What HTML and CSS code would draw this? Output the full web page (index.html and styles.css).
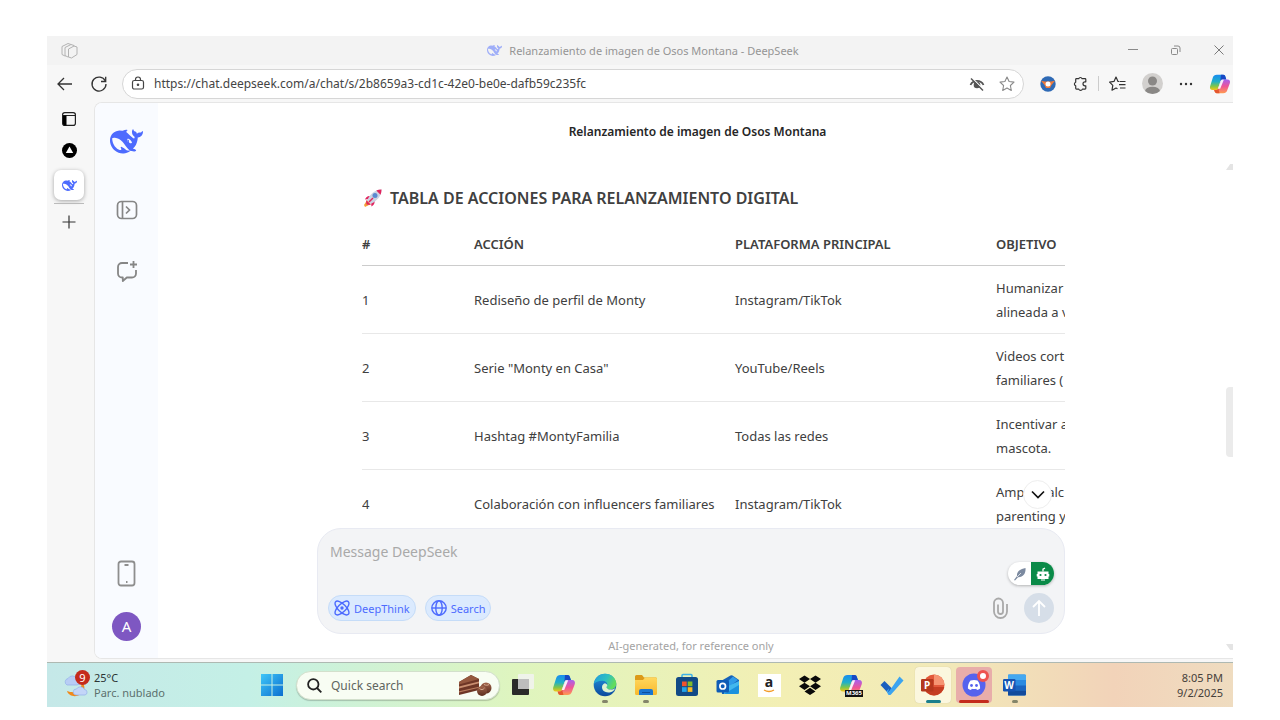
FILE: index.html
```html
<!DOCTYPE html>
<html lang="es">
<head>
<meta charset="utf-8">
<title>Relanzamiento de imagen de Osos Montana - DeepSeek</title>
<link rel="stylesheet" href="styles.css">
</head>
<body>
<svg class="defs" aria-hidden="true">
  <defs>
    <linearGradient id="cpBlue" x1="0" y1="0" x2="0" y2="1"><stop offset="0" stop-color="#1a8cf0"/><stop offset=".45" stop-color="#1fb0c8"/><stop offset=".75" stop-color="#7fc64a"/><stop offset="1" stop-color="#f5c518"/></linearGradient>
    <linearGradient id="cpPink" x1="0" y1="0" x2="0" y2="1"><stop offset="0" stop-color="#a560f0"/><stop offset=".5" stop-color="#ee5598"/><stop offset="1" stop-color="#ff9a50"/></linearGradient>
    <linearGradient id="edgeA" x1="0" y1="0" x2="1" y2="0.4"><stop offset="0" stop-color="#1f9be0"/><stop offset=".6" stop-color="#2fc0c0"/><stop offset="1" stop-color="#62dc5c"/></linearGradient>
    <linearGradient id="edgeB" x1="0" y1="0" x2="0" y2="1"><stop offset="0" stop-color="#2394e0"/><stop offset="1" stop-color="#0b4a9c"/></linearGradient>
    <linearGradient id="winG" x1="0" y1="0" x2="1" y2="1"><stop offset="0" stop-color="#3fc6f8"/><stop offset="1" stop-color="#0a6fd0"/></linearGradient>
    <linearGradient id="folderG" x1="0" y1="0" x2="0" y2="1"><stop offset="0" stop-color="#ffd75e"/><stop offset="1" stop-color="#f8b92c"/></linearGradient>
    <linearGradient id="chocG" x1="0" y1="0" x2="0" y2="1"><stop offset="0" stop-color="#a2664c"/><stop offset="1" stop-color="#5c2c1e"/></linearGradient>
    <symbol id="whale" viewBox="0 0 24 24"><path d="M23.748 4.482c-.254-.124-.364.113-.512.234-.051.039-.094.09-.137.136-.372.397-.806.657-1.373.626-.829-.046-1.537.214-2.163.848-.133-.782-.575-1.248-1.247-1.548-.352-.156-.708-.311-.955-.65-.172-.241-.219-.51-.305-.774-.055-.16-.11-.323-.293-.35-.2-.031-.278.136-.356.276-.313.572-.434 1.202-.422 1.84.027 1.436.633 2.58 1.838 3.393.137.093.172.187.129.323-.082.28-.18.552-.266.833-.055.179-.137.217-.329.14a5.526 5.526 0 01-1.736-1.18c-.857-.828-1.631-1.742-2.597-2.458a11.365 11.365 0 00-.689-.471c-.985-.957.13-1.743.388-1.836.27-.098.093-.432-.779-.428-.872.004-1.67.295-2.687.684a3.055 3.055 0 01-.465.137 9.597 9.597 0 00-2.883-.102c-1.885.21-3.39 1.102-4.497 2.623C.082 8.606-.231 10.684.152 12.85c.403 2.284 1.569 4.175 3.36 5.653 1.858 1.533 3.997 2.284 6.438 2.14 1.482-.085 3.133-.284 4.994-1.86.47.234.962.327 1.78.397.63.059 1.236-.03 1.705-.128.735-.156.684-.837.419-.961-2.155-1.004-1.682-.595-2.113-.926 1.096-1.296 2.746-2.642 3.392-7.003.05-.347.007-.565 0-.845-.004-.17.035-.237.23-.256a4.173 4.173 0 001.545-.475c1.396-.763 1.96-2.015 2.093-3.517.02-.23-.004-.467-.247-.588zM11.581 18c-2.089-1.642-3.102-2.183-3.52-2.16-.392.024-.321.471-.235.763.09.288.207.486.371.739.114.167.192.416-.113.603-.673.416-1.842-.14-1.897-.167-1.361-.802-2.5-1.86-3.301-3.307-.774-1.393-1.224-2.887-1.298-4.482-.02-.386.093-.522.477-.592a4.696 4.696 0 011.529-.039c2.132.312 3.946 1.265 5.468 2.774.868.86 1.525 1.887 2.202 2.891.72 1.066 1.494 2.082 2.48 2.914.348.292.625.514.891.677-.802.09-2.14.11-3.054-.614zm1-6.44a.306.306 0 01.415-.287.302.302 0 01.2.288.306.306 0 01-.31.307.303.303 0 01-.304-.308zm3.11 1.596c-.2.081-.399.151-.59.16a1.245 1.245 0 01-.798-.254c-.274-.23-.47-.358-.552-.758a1.73 1.73 0 01.016-.588c.07-.327-.008-.537-.239-.727-.187-.156-.426-.199-.688-.199a.559.559 0 01-.254-.078c-.11-.054-.2-.19-.114-.358.028-.054.16-.186.192-.21.356-.202.767-.136 1.146.016.352.144.618.408 1.001.782.391.451.462.576.685.914.176.265.336.537.445.848.067.195-.019.354-.25.452z" fill="currentColor"/></symbol>
    <symbol id="copilot" viewBox="0 0 24 24">
      <path d="M8.500 2h7c1.500 0 2 .8 2.400 2l1 3h-4.200c-1.300 0-1.900.8-2.300 2L10 16.500c-.5 1.400-1.200 2-2.600 2H4C1.500 18.500.6 16.800 1.200 14.500L4.200 5C4.900 3 6.200 2 8.500 2z" fill="url(#cpBlue)"/>
      <path d="M13 2h2.500c1.500 0 2 .8 2.400 2l1 3h-4.200c-1.300 0-1.900.8-2.300 2z" fill="#1748c4"/>
      <path d="M15.500 22h-7c-1.500 0-2-.8-2.400-2l-.5-1.500h2.200c1.300 0 1.900-.8 2.300-2L13 9c.5-1.400 1.200-2 2.600-2H20c2.500 0 3.400 1.700 2.800 4l-3 8c-.7 2-2 3-4.300 3z" fill="url(#cpPink)"/>
      <path d="M11.500 22h-3c-1.500 0-2-.8-2.400-2l-.5-1.500h2.200c1.300 0 1.900-.8 2.300-2z" fill="#e4572e"/>
      <path d="M13.600 7.300h2.600l-4 9.800H9.700z" fill="#fff" opacity=".9"/>
    </symbol>
  </defs>
</svg>
<div class="window">
  <header class="titlebar">
    <button class="icon-btn workspaces" aria-label="Workspaces"><svg width="17" height="17" viewBox="0 0 17 17" fill="#f3f3f3" stroke="#b2b2b2" stroke-linejoin="round"><path d="M1 4.500 7 1.500l3 1v9L4 14l-3-1.500z"/><path d="M4 5.500 10 2.500l3 1v9L7 15l-3-1.500z"/><path d="M7.500 7 13 4l3 1v7.500L10.500 16l-3-1z"/></svg></button>
    <div class="window-title"><svg class="whale-small faded" width="15" height="15"><use href="#whale"/></svg><span>Relanzamiento de imagen de Osos Montana - DeepSeek</span></div>
    <div class="window-controls">
      <button class="icon-btn" aria-label="Minimize"><svg width="12" height="12" stroke="#8a8a8a" fill="none"><path d="M1 4.500h10"/></svg></button>
      <button class="icon-btn" aria-label="Restore"><svg width="12" height="12" stroke="#8a8a8a" fill="none"><rect x="1.500" y="3.500" width="6" height="6" rx="1"/><path d="M4 1h4a2 2 0 0 1 2 2v4"/></svg></button>
      <button class="icon-btn" aria-label="Close"><svg width="12" height="12" stroke="#7a7a7a" fill="none"><path d="m1.500 .5 9 9m0-9-9 9"/></svg></button>
    </div>
  </header>

  <nav class="toolbar">
    <button class="icon-btn" aria-label="Back"><svg width="18" height="18" stroke="#333" stroke-width="1.300" fill="none"><path d="M16 9H2m6-6L2 9l6 6"/></svg></button>
    <button class="icon-btn" aria-label="Refresh"><svg width="18" height="18" stroke="#333" stroke-width="1.300" fill="none"><path d="M15.300 6A7 7 0 1 0 16 9"/><path d="M15.700 1.800v4.700H11"/></svg></button>
    <div class="address">
      <svg width="14" height="15" fill="none" stroke="#444" stroke-width="1.200"><rect x="1.500" y="4.500" width="11" height="8.500" rx="1.800"/><path d="M4.500 4.500V3.500a2.500 2.500 0 0 1 5 0v1"/><circle cx="7" cy="8.700" r=".7" fill="#444"/></svg>
      <input class="url" type="text" aria-label="Address" value="https://chat.deepseek.com/a/chat/s/2b8659a3-cd1c-42e0-be0e-dafb59c235fc">
      <button class="icon-btn" aria-label="Tracking hidden"><svg width="16" height="14" fill="none"><path d="M1.500 8C4 2.500 12 2.500 14.500 8" stroke="#555" stroke-width="1.800"/><circle cx="8" cy="8" r="3.300" fill="#555"/><path d="m3 1 12 12" stroke="#fff" stroke-width="1.200"/><path d="m2 1.500 12 12" stroke="#555" stroke-width="1.400"/></svg></button>
      <button class="icon-btn" aria-label="Add to favorites"><svg width="16" height="16" viewBox="0 0 16 16" fill="none" stroke="#8a8a8a" stroke-width="1.100" stroke-linejoin="round"><path d="m8 1 2.100 4.500 4.900.6-3.600 3.400.9 5L8 12.100l-4.300 2.400.9-5L1 6.100l4.900-.6z"/></svg></button>
    </div>
    <div class="tools">
      <button class="icon-btn" aria-label="Extension"><svg width="16" height="16"><circle cx="8" cy="8" r="7.700" fill="#2f6ab5"/><path d="M1 4.800 5 5.500h6l4-.7-3.500 4.200L10 12H6L4.500 9z" fill="#ee7a3a"/><circle cx="8" cy="8" r="2.500" fill="#fff"/></svg></button>
      <button class="icon-btn" aria-label="Extensions"><svg width="16" height="16" viewBox="0 0 16 16" fill="none" stroke="#333" stroke-width="1.200" stroke-linejoin="round"><path d="M5 2.700h1.700a1.800 1.800 0 0 1 3.400 0H13a.8.8 0 0 1 .8.800v2.300h-.8a2 2 0 0 0 0 4h.8v2.500a.8.800 0 0 1-.8.800h-2.600a1.900 1.900 0 0 1-3.600 0H4.500a.8.800 0 0 1-.8-.8V9.800a1.900 1.900 0 0 1 0-3.600V3.500a.8.800 0 0 1 .8-.8z"/></svg></button>
      <span class="divider"></span>
      <button class="icon-btn" aria-label="Favorites"><svg width="17" height="16" fill="none" stroke="#333" stroke-width="1.200" stroke-linejoin="round"><path d="M10.500 5.500 9 5.400 7 1 5 5.400l-4.400.7 3.200 3.300-.8 4.800L7 12l1.500.8"/><path d="M11 5.500h5.500M10 8.700h6.500M11 12h5.500"/></svg></button>
      <button class="icon-btn" aria-label="Profile"><svg width="21" height="21"><defs><clipPath id="pf"><circle cx="10.500" cy="10.500" r="10.500"/></clipPath></defs><g clip-path="url(#pf)"><rect width="21" height="21" fill="#d2d0ce"/><circle cx="10.500" cy="8" r="4.500" fill="#8a8886"/><ellipse cx="10.500" cy="18.500" rx="7.500" ry="4.800" fill="#8a8886"/></g></svg></button>
      <button class="icon-btn" aria-label="More"><svg width="14" height="4" fill="#333"><circle cx="2" cy="2" r="1.200"/><circle cx="7" cy="2" r="1.200"/><circle cx="12" cy="2" r="1.200"/></svg></button>
      <button class="icon-btn" aria-label="Copilot"><svg width="22" height="22"><use href="#copilot"/></svg></button>
    </div>
  </nav>

  <div class="content">
    <aside class="tabs">
      <button class="icon-btn" aria-label="Tab actions"><svg width="14" height="14"><rect x=".6" y=".6" width="12.800" height="12.800" rx="2.200" fill="none" stroke="#222" stroke-width="1.200"/><path d="M1 3.500h12.500" stroke="#222"/><path d="M1 3.500h3.500v10H2L1 12z" fill="#000"/></svg></button>
      <button class="icon-btn" aria-label="Tab"><svg width="15" height="15"><circle cx="7.500" cy="7.500" r="7.500" fill="#000"/><path d="m7.500 3.500 3.700 6.500H3.800z" fill="#fff"/></svg></button>
      <button class="icon-btn tab-active" aria-label="DeepSeek"><svg class="whale-small" width="15" height="15"><use href="#whale"/></svg></button>
      <span class="tab-line"></span>
      <button class="icon-btn" aria-label="New tab"><svg width="14" height="14" stroke="#333" stroke-width="1.200"><path d="M7 .5v13M.5 7h13"/></svg></button>
    </aside>

    <div class="page">
      <aside class="rail">
        <svg class="logo" width="33" height="33"><use href="#whale"/></svg>
        <button class="icon-btn rail-open" aria-label="Open sidebar"><svg width="22" height="20" fill="none" stroke="#868686" stroke-width="1.700"><rect x="1.500" y="1.500" width="19" height="17" rx="4"/><path d="M6.500 1.500v17m3.500-12 3.500 3.500-3.500 3.500"/></svg></button>
        <button class="icon-btn rail-new" aria-label="New chat"><svg width="22" height="22" fill="none" stroke="#868686" stroke-width="1.800" stroke-linejoin="round"><path d="M12 3H6a4 4 0 0 0-4 4v6.500a4 4 0 0 0 4 4h.8V21l4-3.500H16a4 4 0 0 0 4-4V10"/><path d="M17.500 1v7M14 4.500h7"/></svg></button>
        <button class="icon-btn rail-app" aria-label="Get app"><svg width="19" height="27" fill="none" stroke="#8e8e8e" stroke-width="1.800"><rect x="1.500" y="1.500" width="16" height="24" rx="2.500"/><path d="M7.500 5h4M9 22h1.500"/></svg></button>
        <button class="avatar">A</button>
      </aside>

      <main class="chat">
        <h1 class="chat-title">Relanzamiento de imagen de Osos Montana</h1>
        <div class="chat-body">
          <div class="chat-column">
            <section class="message">
              <h2 class="message-heading">
                <svg width="20" height="20" viewBox="0 0 20 20"><path d="M4.500 11.500 1 17l1 2 6-3z" fill="#f5a13a"/><path d="M7 8C5 7.500 3 9 2 11.500L6 11zM11.500 12.500c.5 2.500-.5 4.500-3 6l-.5-4z" fill="#e0245e"/><path d="M18.500 1.500C12 1.500 7.500 5.500 4 12.500l3.500 3.500C14.500 12.500 18.500 8 18.500 1.500z" fill="#cdd3e2"/><path d="M18.500 1.500c-2 0-3.700.3-5.200 1l4.200 4.200c.7-1.500 1-3.200 1-5.200z" fill="#e0245e"/><path d="m3 12 5 5-4.500-.5z" fill="#e0245e"/><circle cx="12" cy="7.500" r="2.500" fill="#5a8ad0"/><path d="m6 14 4-4" stroke="#e0245e" stroke-width="1.500"/></svg>
                <span>TABLA DE ACCIONES PARA RELANZAMIENTO DIGITAL</span>
              </h2>
              <table class="actions">
                <colgroup><col class="c-num"><col class="c-mid"><col class="c-mid"><col class="c-end"></colgroup>
                <thead><tr><th>#</th><th>ACCIÓN</th><th>PLATAFORMA PRINCIPAL</th><th>OBJETIVO</th></tr></thead>
                <tbody>
                  <tr><td>1</td><td>Rediseño de perfil de Monty</td><td>Instagram/TikTok</td><td>Humanizar<br>alineada a v</td></tr>
                  <tr><td>2</td><td>Serie "Monty en Casa"</td><td>YouTube/Reels</td><td>Videos cort<br>familiares (</td></tr>
                  <tr><td>3</td><td>Hashtag #MontyFamilia</td><td>Todas las redes</td><td>Incentivar a<br>mascota.</td></tr>
                  <tr><td>4</td><td>Colaboración con influencers familiares</td><td>Instagram/TikTok</td><td>Ampliar alc<br>parenting y</td></tr>
                </tbody>
              </table>
            </section>
            <form class="composer">
              <button type="button" class="to-bottom" aria-label="Scroll to bottom"><svg width="16" height="10" fill="none" stroke="#111" stroke-width="1.700"><path d="m2 1.500 6 6 6-6"/></svg></button>
              <textarea class="prompt" rows="1" aria-label="Message" placeholder="Message DeepSeek"></textarea>
              <div class="assist">
                <button type="button" class="assist-pen" aria-label="Writing help"><svg width="14" height="14"><path d="M1 13 4 9C3.500 5 7 2 12.500 1c.5 5-2 9.500-7.500 9.200L2 13.500z" fill="#7c8aa0"/><path d="m4 10 4-4" stroke="#fff" stroke-width=".7"/></svg></button>
                <button type="button" class="assist-bot" aria-label="Assistant"><svg width="14" height="14"><path d="M7 4.500V2.200L9 1" stroke="#fff" stroke-width="1.300" fill="none"/><path d="M1.500 4.500h11V7h.8v2.500h-.8V12h-11V9.500H.7V7h.8z" fill="#fff"/><circle cx="4.500" cy="8" r="1.100" fill="#0a8a48"/><circle cx="9.500" cy="8" r="1.100" fill="#0a8a48"/><path d="M5 13h4" stroke="#fff"/></svg></button>
              </div>
              <div class="composer-row">
                <button type="button" class="chip"><svg width="16" height="16" viewBox="0 0 16 16" fill="none" stroke="#4d6bfe" stroke-width="1.400"><ellipse cx="8" cy="8" rx="9" ry="3.900" transform="rotate(45 8 8)"/><ellipse cx="8" cy="8" rx="9" ry="3.900" transform="rotate(-45 8 8)"/><circle cx="8" cy="8" r="1" fill="#4d6bfe"/></svg><span>DeepThink</span></button>
                <button type="button" class="chip"><svg width="16" height="16" viewBox="0 0 16 16" fill="none" stroke="#4d6bfe" stroke-width="1.400"><circle cx="8" cy="8" r="7.200"/><ellipse cx="8" cy="8" rx="3.200" ry="7.200"/><path d="M1 8h14"/></svg><span>Search</span></button>
                <button type="button" class="icon-btn attach" aria-label="Attach"><svg width="16" height="22" fill="none" stroke="#a9a9a9" stroke-width="1.800"><path d="M11 6v8.500a2.500 2.500 0 0 1-5 0V7.500"/><path d="M15 7v7.500a6.500 6.500 0 0 1-13 0V6a4.500 4.500 0 0 1 9 0"/></svg></button>
                <button type="submit" class="send" aria-label="Send"><svg width="16" height="18" fill="none" stroke="#fff" stroke-width="1.800"><path d="M8 17V2M2 8l6-6 6 6"/></svg></button>
              </div>
            </form>
            <p class="note">AI-generated, for reference only</p>
          </div>
          <div class="scroll"><span class="arrow up"></span><span class="thumb"></span><span class="arrow down"></span></div>
        </div>
      </main>
    </div>
  </div>

  <footer class="taskbar">
    <div class="weather">
      <svg width="25" height="30"><path d="M17 12c2 6-3 13-14 9 2 7 14 7 17-1 1-3 0-7-3-8z" fill="#f08a1c"/><path d="M3 15a3.500 3.500 0 0 1 1-6.500 5 5 0 0 1 9 .5 3 3 0 0 1 0 6z" fill="#b8cdf5" stroke="#93b0ea" stroke-width=".7"/><path d="M12 25a3 3 0 0 1 .5-6 4.500 4.500 0 0 1 8 .5 2.800 2.800 0 0 1 .5 5.500z" fill="#c3d5f8" stroke="#93b0ea" stroke-width=".7"/></svg>
      <span class="badge">9</span>
      <div class="weather-text"><span class="temp">25°C</span><span>Parc. nublado</span></div>
    </div>
    <button class="app" aria-label="Start"><svg width="22" height="22" fill="url(#winG)"><path d="M0 0h10.500v10.500H0zM11.500 0H22v10.500H11.500zM0 11.500h10.500V22H0zM11.500 11.500H22V22H11.500z"/></svg></button>
    <label class="quick">
      <svg width="15" height="15" fill="none" stroke="#222" stroke-width="1.800"><circle cx="6.300" cy="6.300" r="5.200"/><path d="m10 10 4.300 4.300"/></svg>
      <input type="text" aria-label="Quick search" placeholder="Quick search">
      <svg width="34" height="22"><path d="m1 8 12-7 8 4v11L1 21z" fill="#6e3626"/><path d="m1 8 12-7 8 4L1 10.500z" fill="#95583f"/><path d="m1 12.500 20-5v1.700L1 14.500z" fill="#c98f70"/><path d="m1 17.300 20-4.500v1L1 18.500z" fill="#b87c5e"/><circle cx="28" cy="14" r="5.500" fill="url(#chocG)"/><circle cx="24" cy="17" r="5" fill="url(#chocG)"/><path d="M21.500 14.500c1.500 1.500 3.500 1.500 5-.5M26 10.500c2 1 3.500 1 5 0" stroke="#d8ab90" fill="none"/></svg>
    </label>
    <div class="apps">
      <button class="app" aria-label="Task view"><svg width="24" height="24"><rect x="1" y="6" width="17" height="16" rx="1" fill="#2a2a2a"/><rect x="7" y="1" width="16" height="15" rx="1" fill="#f2f2f2" opacity=".85"/><path d="M7 6h11v10H7z" fill="#bdbdbd"/></svg></button>
      <button class="app" aria-label="Copilot"><svg width="24" height="24"><use href="#copilot"/></svg></button>
      <button class="app running" aria-label="Edge"><svg width="24" height="24" viewBox="0 0 24 24"><circle cx="12" cy="12" r="11.300" fill="url(#edgeB)"/><path d="M.8 11C2 4.500 6.500.8 12 .8c6.500 0 11.300 4.700 11.300 10 0 3.500-2.500 5.700-6 5.700-2.500 0-4-.9-4-2 0-.6 1-1 1-3 0-2-2-3.800-5-3.800C5.500 7.700 2 9 .8 11z" fill="url(#edgeA)"/><path d="M13.500 14.500c.5 1.300 2 2.200 4.500 2.100 1.700 0 3-.5 4.200-1.300-1 2.400-2.700 3.400-4.700 3.900-5 1-8.500-1.500-8.500-5 0-2 1.200-3.400 3-4 1.600.5 2.300 1.300 2.300 2.300s-1 1.300-.8 2z" fill="#dff3d0"/></svg></button>
      <button class="app running" aria-label="File Explorer"><svg width="24" height="24"><path d="M1 3.500A1.500 1.500 0 0 1 2.500 2H8l2 2.500h12A1.500 1.500 0 0 1 23 6v14H1z" fill="#dc9a18"/><path d="M1 7h8l2-2.500h10.500A1.500 1.500 0 0 1 23 6v14.500A1.500 1.500 0 0 1 21.500 22h-19A1.500 1.500 0 0 1 1 20.500z" fill="url(#folderG)"/><path d="M5 22v-4a2 2 0 0 1 2-2h10a2 2 0 0 1 2 2v4z" fill="#1a76d2"/><path d="M8 19.500h8" stroke="#0d4f9c"/></svg></button>
      <button class="app" aria-label="Store"><svg width="24" height="24"><path d="M7 5V2.500a1 1 0 0 1 1-1h8a1 1 0 0 1 1 1V5" stroke="#3db2e8" stroke-width="1.500" fill="none"/><rect x="1" y="4" width="22" height="19" rx="2.500" fill="#124a86"/><path d="M7 8.500h4.700v4.700H7z" fill="#f0532d"/><path d="M12.700 8.500h4.700v4.700h-4.700z" fill="#80bb2a"/><path d="M7 14.200h4.700v4.700H7z" fill="#22a4ea"/><path d="M12.700 14.200h4.700v4.700h-4.700z" fill="#fcba24"/></svg></button>
      <button class="app" aria-label="Outlook"><svg width="24" height="24"><path d="M5 8 14.500 2.500a2 2 0 0 1 2 0L23 7v12a2 2 0 0 1-2 2H6z" fill="#1561b8"/><path d="m11 9 6-5.500 5 3.500-9 7z" fill="#2f9be8"/><path d="m8 15 15-7v11a2 2 0 0 1-2 2H8z" fill="#42b8ee"/><path d="m8 21 15-9v7a2 2 0 0 1-2 2z" fill="#1b91de"/><rect x=".5" y="7" width="12.500" height="12.500" rx="1.500" fill="#0f5cb6"/><circle cx="6.700" cy="13.200" r="2.800" stroke="#fff" stroke-width="1.700" fill="none"/></svg></button>
      <button class="app" aria-label="Amazon"><span class="amazon">a<svg width="12" height="4" fill="none" stroke="#f39c2a" stroke-width="1.300"><path d="M1 1q5 3 10 0"/></svg></span></button>
      <button class="app" aria-label="Dropbox"><svg width="24" height="22" fill="#0a0a0a"><path d="m6.500 1.500 5.500 3.600-5.500 3.600L1 5.100zM17.500 1.500 23 5.100l-5.500 3.600L12 5.100zM6.500 8.700l5.500 3.600-5.500 3.600L1 12.300zM17.500 8.700l5.500 3.600-5.500 3.600-5.500-3.600zM12 13.800l5.500 3.600L12 21l-5.500-3.600z"/></svg></button>
      <button class="app m365" aria-label="Microsoft 365"><svg width="24" height="24"><use href="#copilot"/></svg><span>M365</span></button>
      <button class="app" aria-label="To Do"><svg width="24" height="20"><path d="m.5 10 4-4L12 13.500l-4 4.500z" fill="#1b5fbe"/><path d="m8 18 11.500-16.500 4 4L11 19.500a2 2 0 0 1-3-.2L6.500 16 9 13.500z" fill="#3ba4f0"/></svg></button>
      <button class="app selected" aria-label="PowerPoint"><svg width="24" height="24"><circle cx="13" cy="12" r="10.500" fill="#e2583a"/><path d="M13 1.500A10.500 10.500 0 0 1 23.500 12H13z" fill="#f69472"/><path d="M2.700 14h20.600A10.500 10.500 0 0 1 2.700 14z" fill="#c53d22"/><rect y="6" width="12.500" height="12.500" rx="1.200" fill="#b5371d"/><text x="6.200" y="15.800" text-anchor="middle" class="glyph">P</text></svg></button>
      <button class="app alert" aria-label="Discord"><svg width="24" height="24"><circle cx="12" cy="12" r="11.500" fill="#5663ee"/><path d="M8.500 7.500c2-.8 5-.8 7 0 1.800 2.300 2.800 5 2.600 8-1 .8-2 1.300-3.100 1.500l-.8-1.300c-1.500.4-3 .4-4.400 0L9 17c-1.100-.2-2.100-.7-3.100-1.500-.2-3 .8-5.700 2.600-8z" fill="#fff"/><circle cx="9.500" cy="12.500" r="1.400" fill="#5663ee"/><circle cx="14.500" cy="12.500" r="1.400" fill="#5663ee"/></svg><span class="dot"></span></button>
      <button class="app running" aria-label="Word"><svg width="24" height="24"><rect x="5" y="1.500" width="18" height="21" rx="1.500" fill="#2b8ae0"/><path d="M5 1.500h17a1 1 0 0 1 1 1V7H5z" fill="#45a8f0"/><path d="M5 12.500h18v5H5z" fill="#1a64c0"/><path d="M5 17.500h18V21a1.500 1.500 0 0 1-1.500 1.500H5z" fill="#124a9c"/><rect y="6" width="12.500" height="12.500" rx="1.200" fill="#1653b2"/><text x="6.200" y="15.600" text-anchor="middle" class="glyph">W</text></svg></button>
    </div>
    <div class="clock"><span>8:05 PM</span><span>9/2/2025</span></div>
  </footer>
</div>
</body>
</html>
```
FILE: styles.css
```css
* { box-sizing: border-box; }
body {
  margin: 0;
  height: 100vh;
  display: flex;
  padding: 36px 47px 13px;
  background: #fff;
  color: #404040;
  font-family: "Noto Sans", "Open Sans", sans-serif;
  font-size: 14px;
}
button, input, textarea { font: inherit; color: inherit; border: 0; background: none; padding: 0; margin: 0; }
svg { display: block; flex: none; }
.defs { position: absolute; width: 0; height: 0; }
.window { flex: 1; min-width: 0; display: flex; flex-direction: column; background: #f7f7f7; overflow: hidden; }
.icon-btn { display: flex; align-items: center; justify-content: center; flex: none; }

.titlebar { flex: none; display: grid; grid-template-columns: 1fr auto 1fr; align-items: center; height: 29px; padding: 0 8px 0 14px; background: #f3f3f3; }
.workspaces { justify-self: start; }
.window-title { display: flex; align-items: center; gap: 7px; font-size: 11px; color: #959595; }
.whale-small { color: #4d6bfe; }
.faded { opacity: .5; }
.window-controls { display: flex; justify-self: end; gap: 31px; }

.toolbar { flex: none; display: flex; align-items: center; height: 37px; gap: 16px; padding: 0 2px 0 9px; }
.address { flex: 1; display: flex; align-items: center; gap: 14px; height: 30px; margin: 0 0 0 -2px; padding: 0 8px; background: #fff; border: 1px solid #d6d6d6; border-radius: 15px; }
.address > svg { margin-right: -5px; }
.url { flex: 1; min-width: 0; font-size: 12px; color: #444; outline: 0; }
.tools { display: flex; align-items: center; gap: 16px; }
.divider { width: 1px; height: 15px; background: #ccc; margin: 0 -6px; }

.content { flex: 1; display: flex; min-height: 0; padding-bottom: 3px; }
.tabs { flex: none; width: 47px; display: flex; flex-direction: column; align-items: center; padding: 10px 3px 0 0; }
.tabs > :nth-child(2) { margin-top: 17px; }
.tab-active { width: 30px; height: 30px; margin-top: 12px; background: #fff; border-radius: 7px; box-shadow: 0 1px 4px #0005; }
.tab-line { width: 30px; height: 1px; margin: 3px 0 11px; background: #bbb; }
.page { flex: 1; min-width: 0; display: flex; background: #fff; border: 1px solid #e6e6e6; border-right: 0; border-radius: 8px 0 0 8px; overflow: hidden; }
.rail { flex: none; width: 63px; display: flex; flex-direction: column; align-items: center; padding: 22px 0 17px; background: #f9fbff; }
.logo { color: #4d6bfe; }
.rail-open { margin-top: 42px; }
.rail-new { margin-top: 40px; }
.rail-app { margin-top: auto; }
.avatar { width: 29px; height: 29px; margin-top: 25px; border-radius: 50%; background: #7e57c2; color: #fff; font-size: 15px; line-height: 29px; }

.chat { flex: 1; min-width: 0; display: flex; flex-direction: column; }
.chat-title { margin: 0; padding: 0 0 0 4px; text-align: center; font-size: 12px; font-weight: 600; line-height: 58px; color: #262626; }
.chat-body { flex: 1; min-height: 0; display: flex; }
.chat-column { flex: 1; min-width: 0; display: flex; flex-direction: column; padding: 0 161px 0 159px; }
.message { flex: 1; min-height: 0; margin-left: 45px; padding-top: 25px; overflow: hidden; }
.message-heading { display: flex; align-items: center; gap: 7px; margin: 0 0 12px 1px; font-size: 16px; font-weight: 600; line-height: 24px; white-space: nowrap; }
.actions { width: 100%; table-layout: fixed; border-collapse: separate; border-spacing: 0; line-height: 24px; font-size: 13px; }
.actions th { padding: 10px 0 9px; text-align: left; font-weight: 600; white-space: nowrap; border-bottom: 1px solid #ccc; }
.actions td { padding: 10px 0 9px; white-space: nowrap; border-bottom: 1px solid #e8e8e8; }
.c-num { width: 112px; }
.c-mid { width: 261px; }

.composer { position: relative; flex: none; margin-top: -5px; padding: 11px 10px 10px 12px; background: #f3f4f6; border: 1px solid #e8eaf2; border-radius: 24px; }
.prompt { display: block; width: 100%; height: 24px; line-height: 24px; padding: 0; resize: none; outline: 0; overflow: hidden; }
.prompt::placeholder { color: #a9a9a9; opacity: 1; }
.to-bottom { position: absolute; right: 12px; top: -49px; width: 29px; height: 29px; display: flex; align-items: center; justify-content: center; background: #fff; border: 1px solid #eee; border-radius: 50%; }
.assist { display: flex; width: 46px; height: 23px; margin: -2px 0 8px auto; border-radius: 12px; overflow: hidden; background: #fff; box-shadow: 0 1px 3px #0004; }
.assist button { flex: 1; display: flex; align-items: center; justify-content: center; }
.assist-bot { background: #0a8a48; }
.composer-row { display: flex; align-items: center; gap: 9px; margin-left: -2px; }
.chip { display: flex; align-items: center; gap: 4px; height: 26px; padding: 0 5px; border: 1px solid #c5dcf8; border-radius: 13px; background: #dbeafe; color: #4d6bfe; font-size: 11px; }
.attach { margin: 0 7px 0 auto; }
.send { display: flex; align-items: center; justify-content: center; width: 30px; height: 30px; border-radius: 50%; background: #d6dee8; }
.note { flex: none; margin: 0; text-align: center; font-size: 11px; line-height: 24px; color: #a3a3a3; }
.scroll { flex: none; width: 7px; display: flex; flex-direction: column; align-items: flex-end; justify-content: space-between; padding: 3px 0 8px; overflow: hidden; }
.thumb { width: 7px; height: 70px; margin-bottom: -30px; border-radius: 4px 0 0 4px; background: #ebebeb; }
.arrow { width: 7px; height: 6px; background: #e4e4e4; }
.up { clip-path: polygon(60% 0, 100% 0, 100% 100%, 0 100%); }
.down { clip-path: polygon(0 0, 100% 0, 100% 100%, 60% 100%); }

.taskbar { flex: none; display: flex; align-items: center; height: 45px; padding: 0 10px 0 17px; border-top: 1px solid #aeb9b2; background: linear-gradient(90deg, #c5e8e8 0, #c4f0e6 17%, #dff5be 40%, #f3efb4 62%, #f2eab8 75%, #f2d3b9 90%, #efdcc0 100%); }
.weather { position: relative; flex: none; display: flex; align-items: center; gap: 5px; width: 190px; font-size: 11px; line-height: 15px; color: #5c706e; }
.weather-text { display: flex; flex-direction: column; }
.temp { color: #2c3434; }
.badge { position: absolute; left: 11px; top: 0; width: 15px; height: 15px; border-radius: 50%; background: #c42b1c; color: #fff; text-align: center; }
.app { position: relative; flex: none; display: flex; align-items: center; justify-content: center; width: 36px; height: 36px; }
.quick { flex: none; display: flex; align-items: center; gap: 9px; width: 204px; height: 29px; margin: 0 5px 0 6px; padding: 0 7px 0 10px; border: 1px solid #d3e0cc; border-radius: 15px; background: #f8fdf3; box-shadow: 0 1px 1px #0003; }
.quick input { flex: 1; min-width: 0; font-size: 12px; outline: 0; }
.quick input::placeholder { color: #5f6560; opacity: 1; }
.apps { display: flex; gap: 5px; }
.running::after, .selected::after, .alert::after { content: ""; position: absolute; bottom: 0; width: 6px; height: 3px; border-radius: 2px; background: #84856a; }
.selected { background: #fbf7de; border-radius: 4px; box-shadow: 0 0 1px #0003; }
.selected::after { width: 15px; background: #1b7f8c; }
.alert { background: #e8adaa; border-radius: 4px; }
.alert::after { width: 30px; background: #c42b1c; }
.dot { position: absolute; right: 3px; top: 3px; width: 12px; height: 12px; border-radius: 50%; border: 3px solid #ee5350; background: #fff; }
.amazon { display: flex; flex-direction: column; align-items: center; width: 23px; height: 23px; background: #fff; color: #222; font-size: 14px; font-weight: 700; line-height: 15px; }
.m365 span { position: absolute; right: 6px; bottom: 6px; padding: 0 1px; background: #111; color: #fff; font-size: 6px; font-weight: 700; line-height: 7px; }
.glyph { fill: #fff; font-size: 10px; font-weight: 700; }
.clock { margin-left: auto; display: flex; flex-direction: column; align-items: flex-end; font-size: 11px; line-height: 15px; color: #45403a; }
```
